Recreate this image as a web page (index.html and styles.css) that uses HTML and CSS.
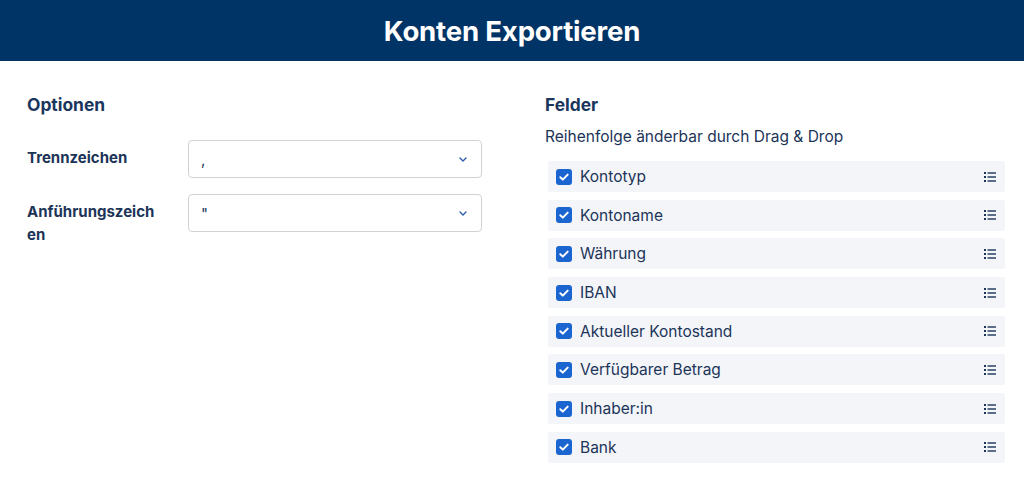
FILE: index.html
```html
<!DOCTYPE html>
<html lang="de">
<head>
<meta charset="utf-8">
<title>Konten Exportieren</title>
<link rel="stylesheet" href="styles.css">
</head>
<body>
<header class="topbar"><h1 class="title">Konten Exportieren</h1></header>
<main class="content">
  <section class="options">
    <h2 class="section-title">Optionen</h2>
    <div class="form-row">
      <label class="form-label">Trennzeichen</label>
      <div class="select"><span class="select-value">,</span>
        <svg class="chevron" viewBox="0 0 8 5" width="8" height="5"><path d="M1 1l3 3 3-3" fill="none" stroke="currentColor" stroke-width="1.4" stroke-linecap="round" stroke-linejoin="round"/></svg>
      </div>
    </div>
    <div class="form-row">
      <label class="form-label">Anführungszeichen</label>
      <div class="select"><span class="select-value">"</span>
        <svg class="chevron" viewBox="0 0 8 5" width="8" height="5"><path d="M1 1l3 3 3-3" fill="none" stroke="currentColor" stroke-width="1.4" stroke-linecap="round" stroke-linejoin="round"/></svg>
      </div>
    </div>
  </section>
  <section class="fields">
    <h2 class="section-title">Felder</h2>
    <p class="hint">Reihenfolge änderbar durch Drag &amp; Drop</p>
    <ul class="field-list">
      <li class="field"><span class="check"><svg viewBox="0 0 16 16" width="16" height="16"><path d="M4.3 8.2l2.5 2.4 4.9-5" fill="none" stroke="#fff" stroke-width="2" stroke-linecap="round" stroke-linejoin="round"/></svg></span><span class="field-name">Kontotyp</span><svg class="handle" viewBox="0 0 12 10" width="12" height="10"><rect x="0" y="0" width="2" height="2"/><rect x="0" y="4" width="2" height="2"/><rect x="0" y="8" width="2" height="2"/><rect x="3.5" y="0.3" width="8.5" height="1.4"/><rect x="3.5" y="4.3" width="8.5" height="1.4"/><rect x="3.5" y="8.3" width="8.5" height="1.4"/></svg></li>
      <li class="field"><span class="check"><svg viewBox="0 0 16 16" width="16" height="16"><path d="M4.3 8.2l2.5 2.4 4.9-5" fill="none" stroke="#fff" stroke-width="2" stroke-linecap="round" stroke-linejoin="round"/></svg></span><span class="field-name">Kontoname</span><svg class="handle" viewBox="0 0 12 10" width="12" height="10"><rect x="0" y="0" width="2" height="2"/><rect x="0" y="4" width="2" height="2"/><rect x="0" y="8" width="2" height="2"/><rect x="3.5" y="0.3" width="8.5" height="1.4"/><rect x="3.5" y="4.3" width="8.5" height="1.4"/><rect x="3.5" y="8.3" width="8.5" height="1.4"/></svg></li>
      <li class="field"><span class="check"><svg viewBox="0 0 16 16" width="16" height="16"><path d="M4.3 8.2l2.5 2.4 4.9-5" fill="none" stroke="#fff" stroke-width="2" stroke-linecap="round" stroke-linejoin="round"/></svg></span><span class="field-name">Währung</span><svg class="handle" viewBox="0 0 12 10" width="12" height="10"><rect x="0" y="0" width="2" height="2"/><rect x="0" y="4" width="2" height="2"/><rect x="0" y="8" width="2" height="2"/><rect x="3.5" y="0.3" width="8.5" height="1.4"/><rect x="3.5" y="4.3" width="8.5" height="1.4"/><rect x="3.5" y="8.3" width="8.5" height="1.4"/></svg></li>
      <li class="field"><span class="check"><svg viewBox="0 0 16 16" width="16" height="16"><path d="M4.3 8.2l2.5 2.4 4.9-5" fill="none" stroke="#fff" stroke-width="2" stroke-linecap="round" stroke-linejoin="round"/></svg></span><span class="field-name">IBAN</span><svg class="handle" viewBox="0 0 12 10" width="12" height="10"><rect x="0" y="0" width="2" height="2"/><rect x="0" y="4" width="2" height="2"/><rect x="0" y="8" width="2" height="2"/><rect x="3.5" y="0.3" width="8.5" height="1.4"/><rect x="3.5" y="4.3" width="8.5" height="1.4"/><rect x="3.5" y="8.3" width="8.5" height="1.4"/></svg></li>
      <li class="field"><span class="check"><svg viewBox="0 0 16 16" width="16" height="16"><path d="M4.3 8.2l2.5 2.4 4.9-5" fill="none" stroke="#fff" stroke-width="2" stroke-linecap="round" stroke-linejoin="round"/></svg></span><span class="field-name">Aktueller Kontostand</span><svg class="handle" viewBox="0 0 12 10" width="12" height="10"><rect x="0" y="0" width="2" height="2"/><rect x="0" y="4" width="2" height="2"/><rect x="0" y="8" width="2" height="2"/><rect x="3.5" y="0.3" width="8.5" height="1.4"/><rect x="3.5" y="4.3" width="8.5" height="1.4"/><rect x="3.5" y="8.3" width="8.5" height="1.4"/></svg></li>
      <li class="field"><span class="check"><svg viewBox="0 0 16 16" width="16" height="16"><path d="M4.3 8.2l2.5 2.4 4.9-5" fill="none" stroke="#fff" stroke-width="2" stroke-linecap="round" stroke-linejoin="round"/></svg></span><span class="field-name">Verfügbarer Betrag</span><svg class="handle" viewBox="0 0 12 10" width="12" height="10"><rect x="0" y="0" width="2" height="2"/><rect x="0" y="4" width="2" height="2"/><rect x="0" y="8" width="2" height="2"/><rect x="3.5" y="0.3" width="8.5" height="1.4"/><rect x="3.5" y="4.3" width="8.5" height="1.4"/><rect x="3.5" y="8.3" width="8.5" height="1.4"/></svg></li>
      <li class="field"><span class="check"><svg viewBox="0 0 16 16" width="16" height="16"><path d="M4.3 8.2l2.5 2.4 4.9-5" fill="none" stroke="#fff" stroke-width="2" stroke-linecap="round" stroke-linejoin="round"/></svg></span><span class="field-name">Inhaber:in</span><svg class="handle" viewBox="0 0 12 10" width="12" height="10"><rect x="0" y="0" width="2" height="2"/><rect x="0" y="4" width="2" height="2"/><rect x="0" y="8" width="2" height="2"/><rect x="3.5" y="0.3" width="8.5" height="1.4"/><rect x="3.5" y="4.3" width="8.5" height="1.4"/><rect x="3.5" y="8.3" width="8.5" height="1.4"/></svg></li>
      <li class="field"><span class="check"><svg viewBox="0 0 16 16" width="16" height="16"><path d="M4.3 8.2l2.5 2.4 4.9-5" fill="none" stroke="#fff" stroke-width="2" stroke-linecap="round" stroke-linejoin="round"/></svg></span><span class="field-name">Bank</span><svg class="handle" viewBox="0 0 12 10" width="12" height="10"><rect x="0" y="0" width="2" height="2"/><rect x="0" y="4" width="2" height="2"/><rect x="0" y="8" width="2" height="2"/><rect x="3.5" y="0.3" width="8.5" height="1.4"/><rect x="3.5" y="4.3" width="8.5" height="1.4"/><rect x="3.5" y="8.3" width="8.5" height="1.4"/></svg></li>
    </ul>
  </section>
</main>
</body>
</html>
```
FILE: styles.css
```css
* { box-sizing: border-box; }
html, body { margin: 0; padding: 0; }
body {
  font-family: Inter, "Noto Sans", "Liberation Sans", sans-serif;
  color: #1c3458;
  background: #fff;
  width: 1024px;
  height: 494px;
  overflow: hidden;
}
.topbar {
  height: 61px;
  background: #013466;
  display: flex;
  align-items: center;
  justify-content: center;
}
.title {
  margin: 0;
  color: #fff;
  font-size: 27.6px;
  font-weight: 700;
  line-height: 34px;
  letter-spacing: -0.2px;
}
.content {
  display: grid;
  grid-template-columns: 455px 1fr;
  column-gap: 63px;
  padding: 32px 19px 0 27px;
}
.section-title {
  margin: 0;
  font-size: 17.4px;
  font-weight: 700;
  line-height: 24px;
  color: #1b365d;
}
.options .section-title { margin-bottom: 23px; }
.form-row {
  display: flex;
  align-items: flex-start;
  margin-bottom: 16px;
}
.form-label {
  width: 132px;
  margin-right: 29px;
  font-size: 15px;
  font-weight: 700;
  line-height: 23px;
  padding-top: 6px;
  overflow-wrap: anywhere;
  color: #1c3458;
}
.select {
  flex: 1;
  height: 38px;
  border: 1px solid #cfd3d8;
  border-radius: 4px;
  display: flex;
  align-items: center;
  justify-content: space-between;
  padding: 0 14px 0 12px;
  font-size: 15px;
  color: #1c3458;
}
.chevron { color: #2b5cae; }
.hint {
  margin: 9px 0 13px;
  font-size: 15.5px;
  line-height: 22px;
  color: #1c3458;
}
.field-list {
  list-style: none;
  margin: 0 0 0 3px;
  padding: 0;
  display: flex;
  flex-direction: column;
  gap: 7.7px;
}
.field {
  height: 31px;
  background: #f3f5f9;
  border-radius: 2px;
  display: flex;
  align-items: center;
  padding: 0 9px 0 8px;
}
.check {
  width: 16px;
  height: 16px;
  border-radius: 3px;
  background: #1b65d1;
  display: flex;
  margin-right: 8px;
}
.field-name {
  flex: 1;
  font-size: 15.5px;
  color: #1c3458;
}
.handle { fill: #1c3458; }
```
